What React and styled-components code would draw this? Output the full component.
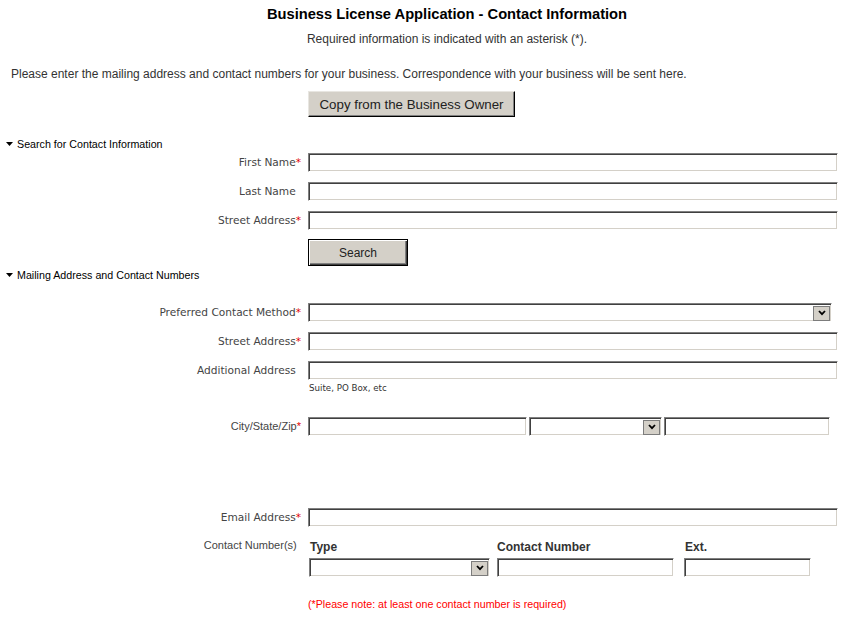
import React from "react";
import styled, { createGlobalStyle } from "styled-components";

const GlobalStyle = createGlobalStyle`
  html, body { margin: 0; padding: 0; background: #fff; overflow: hidden; }
  body { font-family: "Liberation Sans", Arial, sans-serif; }
`;

const Page = styled.div`
  width: 894px;
  display: flex;
  flex-direction: column;
`;

const Title = styled.h1`
  margin: 5px 0 0;
  font: bold 14.7px/18px "Liberation Sans", Arial, sans-serif;
  color: #000;
  text-align: center;
`;

const Subtitle = styled.p`
  margin: 8px 0 0;
  font-size: 12px;
  line-height: 16px;
  color: #333;
  text-align: center;
`;

const Intro = styled.p`
  margin: 19px 0 0 11px;
  font-size: 12px;
  line-height: 16px;
  color: #333;
`;

const SectionHeader = styled.div`
  display: flex;
  align-items: center;
  gap: 4px;
  margin: ${(p) => p.$top}px 0 0 6px;
  font: 10.7px/14px "Liberation Sans", Arial, sans-serif;
  color: #000;
`;

const FieldRow = styled.div`
  display: grid;
  grid-template-columns: 303px auto;
  column-gap: 5px;
  align-items: ${(p) => (p.$start ? "start" : "center")};
  margin-top: ${(p) => p.$top || 0}px;
`;

const Label = styled.div`
  text-align: right;
  padding-right: 2px;
  padding-bottom: ${(p) => (p.$arial ? 1 : 2)}px;
  white-space: nowrap;
  color: #444;
  font: ${(p) =>
    p.$arial
      ? `11px/14px "Liberation Sans", Arial, sans-serif`
      : `10.6px/14px "DejaVu Sans", Verdana, sans-serif`};
`;

const Req = styled.span`
  color: #e00000;
  visibility: ${(p) => (p.$hidden ? "hidden" : "visible")};
`;

const TextInput = styled.input`
  display: block;
  box-sizing: border-box;
  width: ${(p) => p.$w}px;
  height: 19px;
  margin: 0;
  padding: 0 3px;
  background: #fff;
  border: 1px solid;
  border-color: #808080 #fff #fff #808080;
  box-shadow: inset 1px 1px 0 #404040, inset -1px -1px 0 #d4d0c8;
  outline: none;
  font: 11px "Liberation Sans", Arial, sans-serif;
`;

const SelectBox = styled.div`
  display: flex;
  justify-content: flex-end;
  align-items: center;
  box-sizing: border-box;
  width: ${(p) => p.$w}px;
  height: 19px;
  padding: 1px 0 1px 0;
  background: #fff;
  border: 1px solid;
  border-color: #808080 #fff #fff #808080;
  box-shadow: inset 1px 1px 0 #404040, inset -1px -1px 0 #d4d0c8;
`;

const ArrowButton = styled.div`
  box-sizing: border-box;
  width: 17px;
  height: 15px;
  margin-right: 1px;
  margin-top: 1px;
  display: flex;
  align-items: center;
  justify-content: center;
  background: #d4d0c8;
  border: 1px solid #7c7c7c;
`;

const Button = styled.button`
  box-sizing: border-box;
  width: ${(p) => p.$w}px;
  height: ${(p) => p.$h}px;
  margin: 0;
  padding: 0;
  background: #d4d0c8;
  color: #222;
  font: ${(p) => p.$size}px "Liberation Sans", Arial, sans-serif;
  cursor: pointer;
  border: 1px solid;
  border-color: ${(p) =>
    p.$default ? "#000" : "#e8e6e1 #000 #000 #e8e6e1"};
  box-shadow: ${(p) =>
    p.$default
      ? "inset 1px 1px 0 #fff, inset -1px -1px 0 #404040, inset -2px -2px 0 #808080"
      : "inset -1px -1px 0 #808080"};
`;

const Hint = styled.div`
  grid-column: 2;
  padding-left: 1px;
  font: 8.7px/12px "DejaVu Sans", Verdana, sans-serif;
  color: #333;
`;

const Inline = styled.div`
  display: flex;
  gap: ${(p) => p.$gap || 2}px;
`;

const ContactGrid = styled.div`
  display: grid;
  grid-template-columns: 188px 187px 130px;
  row-gap: 4px;
  padding-left: 1px;
`;

const ColHead = styled.div`
  padding-top: 2px;
  font: bold 12px/14px "Liberation Sans", Arial, sans-serif;
  color: #333;
  padding-left: ${(p) => p.$pad || 0}px;
`;

const Note = styled.div`
  margin-top: 20px;
  padding-left: 308px;
  font: 10.7px/14px "Liberation Sans", Arial, sans-serif;
  color: #f00;
`;

const Triangle = () => (
  <svg width="7" height="4" viewBox="0 0 7 4">
    <polygon points="0,0 7,0 3.5,4" fill="#000" />
  </svg>
);

const Chevron = () => (
  <svg width="8" height="6" viewBox="0 0 8 6">
    <path d="M1 1 L4 4.2 L7 1" fill="none" stroke="#000" strokeWidth="1.8" />
  </svg>
);

const Select = ({ w }) => (
  <SelectBox $w={w}>
    <ArrowButton>
      <Chevron />
    </ArrowButton>
  </SelectBox>
);

const Field = ({ label, req, arial, top, children }) => (
  <FieldRow $top={top}>
    <Label $arial={arial}>
      {label}
      <Req $hidden={!req}>*</Req>
    </Label>
    {children}
  </FieldRow>
);

export default function App() {
  return (
    <Page>
      <GlobalStyle />
      <Title>Business License Application - Contact Information</Title>
      <Subtitle>Required information is indicated with an asterisk (*).</Subtitle>
      <Intro>
        Please enter the mailing address and contact numbers for your business.
        Correspondence with your business will be sent here.
      </Intro>
      <FieldRow $top={9}>
        <Label />
        <Button $w={207} $h={26} $size={13.3}>
          Copy from the Business Owner
        </Button>
      </FieldRow>

      <SectionHeader $top={20}>
        <Triangle />
        Search for Contact Information
      </SectionHeader>
      <Field label="First Name" req top={2}>
        <TextInput $w={530} />
      </Field>
      <Field label="Last Name" top={10}>
        <TextInput $w={530} />
      </Field>
      <Field label="Street Address" req top={10}>
        <TextInput $w={530} />
      </Field>
      <FieldRow $top={9}>
        <Label />
        <Button $default $w={100} $h={27} $size={12}>
          Search
        </Button>
      </FieldRow>

      <SectionHeader $top={2}>
        <Triangle />
        Mailing Address and Contact Numbers
      </SectionHeader>
      <Field label="Preferred Contact Method" req top={21}>
        <Select w={524} />
      </Field>
      <Field label="Street Address" req top={10}>
        <TextInput $w={530} />
      </Field>
      <Field label="Additional Address" top={10}>
        <TextInput $w={530} />
      </Field>
      <FieldRow $top={2}>
        <Hint>Suite, PO Box, etc</Hint>
      </FieldRow>
      <Field label="City/State/Zip" req arial top={23}>
        <Inline $gap={2}>
          <TextInput $w={219} />
          <Select w={133} />
          <TextInput $w={166} />
        </Inline>
      </Field>
      <Field label="Email Address" req top={72}>
        <TextInput $w={530} />
      </Field>
      <FieldRow $start $top={11}>
        <Label $arial>
          Contact Number(s)
          <Req $hidden>*</Req>
        </Label>
        <ContactGrid>
          <ColHead $pad={1}>Type</ColHead>
          <ColHead>Contact Number</ColHead>
          <ColHead $pad={1}>Ext.</ColHead>
          <Select w={181} />
          <TextInput $w={177} />
          <TextInput $w={127} />
        </ContactGrid>
      </FieldRow>
      <Note>(*Please note: at least one contact number is required)</Note>
    </Page>
  );
}
